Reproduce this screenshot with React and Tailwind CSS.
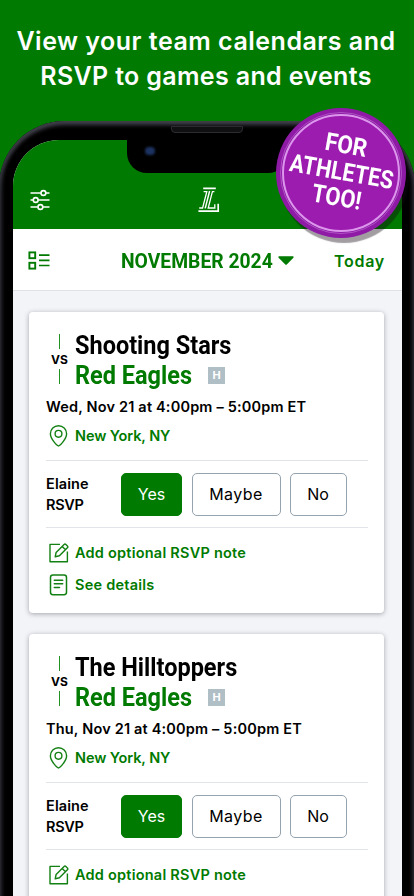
import clsx from 'clsx';

const events = [
  { id: 1, opponent: 'Shooting Stars', date: 'Wed, Nov 21 at 4:00pm – 5:00pm ET' },
  { id: 2, opponent: 'The Hilltoppers', date: 'Thu, Nov 21 at 4:00pm – 5:00pm ET' },
];

const condensed = 'inline-block origin-left whitespace-nowrap font-[Roboto,sans-serif] font-bold';

const FiltersIcon = () => (
  <svg width="20" height="22" viewBox="0 0 20 22" fill="none" stroke="white" strokeWidth="1.6">
    <path d="M0.5 4h10.3M16 4h3.5M0.5 11h2.6M8.2 11h11.3M0.5 18h7.3M13 18h6.5" />
    <circle cx="13.4" cy="4" r="2.4" />
    <circle cx="5.7" cy="11" r="2.4" />
    <circle cx="10.4" cy="18" r="2.4" />
  </svg>
);

const LeagueLogo = () => (
  <svg width="22" height="26" viewBox="0 0 22 26" fill="none" stroke="white" strokeWidth="1.3">
    <path d="M5.2 1.3h12.6" strokeWidth="1.7" />
    <path d="M5.6 4.6h3.2L4.6 21H1.2M16.4 4.6h-2L10.2 21h6.6v-3.8" />
    <path d="M11.6 4L7.2 21.4" strokeWidth="1.5" />
    <path d="M0.4 24.2h19.8v-7.4" strokeWidth="1.7" />
  </svg>
);

const AgendaIcon = () => (
  <svg width="22" height="19" viewBox="0 0 22 19" fill="none" stroke="#007a00" strokeWidth="1.9">
    <rect x="1.4" y="1.4" width="5.8" height="5.8" />
    <rect x="1.4" y="11.8" width="5.8" height="5.8" />
    <path d="M11 4.2h10.5M11 9.3h10.5M11 14.5h10.5" strokeWidth="1.7" />
  </svg>
);

const PinIcon = () => (
  <svg width="19" height="22" viewBox="0 0 19 22" fill="none" stroke="#138013" strokeWidth="1.4">
    <path d="M9.5 21C8.4 21 1.4 14.2 1.4 8.8a8.1 8.1 0 0 1 16.2 0C17.6 14.2 10.6 21 9.5 21Z" />
    <circle cx="9.5" cy="8.8" r="3.4" />
  </svg>
);

const NoteIcon = () => (
  <svg width="20" height="20" viewBox="0 0 20 20" fill="none" stroke="#138013" strokeWidth="1.4" strokeLinejoin="round">
    <path d="M11 1.4H1v17.4h17.4V8.6" />
    <path d="M6.2 13.8l.9-4.3 8-8a1.3 1.3 0 0 1 1.8 0l1.5 1.5a1.3 1.3 0 0 1 0 1.8l-8 8ZM13.2 3.4l3.3 3.3" />
  </svg>
);

const DetailsIcon = () => (
  <svg width="19" height="22" viewBox="0 0 19 22" fill="none" stroke="#138013" strokeWidth="1.5" strokeLinecap="round">
    <rect x="1.5" y="1" width="16" height="19.7" rx="2.4" />
    <path d="M5.3 6.2h8.4M5.3 9.8h8.4M5.3 13.6h5.2" />
  </svg>
);

const RsvpButton = ({ selected, className, children }) => (
  <button
    className={clsx(
      'h-[43px] rounded-[5px] border text-base',
      selected ? 'border-[#007a00] bg-[#007a00] text-white' : 'border-[#94a3ae] bg-white text-black',
      className
    )}
  >
    {children}
  </button>
);

const EventCard = ({ event }) => (
  <article className="h-[301px] shrink-0 rounded-[4px] bg-white pl-[17px] pr-4 pt-[18px] shadow-[0_1px_5px_rgba(40,45,60,0.4)]">
    <div className="flex h-[62px]">
      <div className="flex w-[27px] flex-col items-center pt-1">
        <span className="h-[15px] w-[1.5px] bg-[#229322]" />
        <span className="flex h-5 items-center pt-[2px] text-[12px] font-bold leading-none">VS</span>
        <span className="h-[15px] w-[1.5px] bg-[#229322]" />
      </div>
      <div className="ml-[2px] text-[25px] leading-[30px]">
        <div className="h-[30px]">
          <span className={clsx(condensed, 'scale-x-[0.94]')}>{event.opponent}</span>
        </div>
        <div className="flex h-[30px] items-center">
          <span className="w-[133px]">
            <span className={clsx(condensed, 'scale-x-[0.94] text-[#007a00]')}>Red Eagles</span>
          </span>
          <span className="grid size-[17px] place-items-center bg-[#b0bec5] text-[11px] font-bold leading-none text-white">H</span>
        </div>
      </div>
    </div>
    <p className="mt-[3px] h-6 whitespace-nowrap text-[14.5px] font-semibold leading-6 tracking-[0.18px]">{event.date}</p>
    <div className="mt-[5px] flex h-6 items-center gap-[7px] pl-[3px] text-[#007a00]">
      <PinIcon />
      <span className="text-[14.5px] font-semibold tracking-[-0.1px]">New York, NY</span>
    </div>
    <div className="mt-3 flex h-[68px] items-center border-y-[1.5px] border-[#e0e4e8]">
      <div className="w-[75px] text-[14.5px] font-semibold leading-[21px] tracking-[0.1px]">
        <div>Elaine</div>
        <div className="tracking-[-0.3px]">RSVP</div>
      </div>
      <div className="flex">
        <RsvpButton selected className="w-[61px]">Yes</RsvpButton>
        <RsvpButton className="ml-[9.5px] w-[89px] tracking-[0.45px]">Maybe</RsvpButton>
        <RsvpButton className="ml-[9px] w-[57px]">No</RsvpButton>
      </div>
    </div>
    <div className="mt-3 flex flex-col gap-2 pl-[3px] text-[14.5px] font-semibold tracking-[0.23px] text-[#007a00]">
      <div className="flex h-6 items-center gap-[6px] pt-px">
        <NoteIcon />
        <span>Add optional RSVP note</span>
      </div>
      <div className="flex h-6 items-center gap-[7px] pt-px">
        <DetailsIcon />
        <span>See details</span>
      </div>
    </div>
  </article>
);

const PromoBadge = () => (
  <div className="absolute left-[276px] top-[108px] grid size-[130px] place-items-center rounded-full bg-[#8e1aa6] shadow-[3px_5px_1px_rgba(20,10,20,0.4)]">
    <div className="grid size-[122px] place-items-center rounded-full border border-[#b050c4]">
      <div className="grid size-[118px] place-items-center rounded-full border-2 border-[#dc96ec] bg-[#9c1cb0]">
        <div className="flex translate-x-px -translate-y-px rotate-[10deg] flex-col items-center font-[Roboto,sans-serif] text-[25px] font-bold leading-[26.5px] text-white">
          <span className="scale-x-[0.9]">FOR</span>
          <span className="-mx-4 scale-x-[0.865]">ATHLETES</span>
          <span className="scale-x-[0.88]">TOO!</span>
        </div>
      </div>
    </div>
  </div>
);

export default function App() {
  return (
    <main className="relative h-[896px] w-[414px] overflow-hidden bg-[#007a00] font-['Inter','Liberation_Sans',sans-serif] text-black">
      <h1 className="h-[121px] whitespace-nowrap pt-[24px] text-center text-[25px] font-semibold leading-[35px] text-white">
        <span className="-ml-0.5 block tracking-[0.5px]">View your team calendars and</span>
        <span className="-ml-0.5 block tracking-[0.35px]">RSVP to games and events</span>
      </h1>

      <section className="relative -ml-px h-[850px] w-[416px] rounded-t-[66px] bg-black pl-[14px] pr-[13px] pt-[19px] shadow-[inset_0_4px_4px_#40404a,inset_3px_0_4px_#24242c,inset_-3px_0_4px_#24242c]">
        <div className="absolute left-[172px] top-[5px] h-[7px] w-[72px] rounded-b-[4px] border border-[#2c2c30] bg-[#101012]" />
        <div className="flex h-[800px] flex-col overflow-hidden rounded-t-[46px] bg-[#f3f4f8]">
          <header className="relative flex h-[88.5px] shrink-0 items-end bg-[#007a00] pb-[16px] pl-[17px]">
            <div className="absolute left-[114px] top-0 h-[33px] w-[161px] rounded-b-[20px] bg-black">
              <span className="absolute left-[18px] top-[7px] h-[8px] w-[10px] rounded-full bg-[#1c3260] blur-[1px]" />
            </div>
            <div className="mb-[2px]">
              <FiltersIcon />
            </div>
            <div className="ml-[148px]">
              <LeagueLogo />
            </div>
          </header>
          <div className="flex h-[62.5px] shrink-0 items-center border-b border-[#dfe1e6] bg-white pl-[15px] pt-[3px] text-[#007a00]">
            <AgendaIcon />
            <div className="ml-[71px] w-[157px] text-xl">
              <span className={clsx(condensed, 'scale-x-[0.965]')}>NOVEMBER 2024</span>
            </div>
            <svg width="16" height="9" viewBox="0 0 16 9" fill="#007a00">
              <path d="M1.2 0.3h13.6a.9.9 0 0 1 .6 1.4L8.8 8.4a1 1 0 0 1-1.5 0L.6 1.7A.9.9 0 0 1 1.2.3Z" />
            </svg>
            <span className="ml-[40px] text-[16px] font-semibold tracking-[0.7px]">Today</span>
          </div>
          <div className="flex flex-col gap-[21px] pl-4 pr-[18px] pt-[21px]">
            {events.map((event) => (
              <EventCard key={event.id} event={event} />
            ))}
          </div>
        </div>
      </section>

      <PromoBadge />
    </main>
  );
}
